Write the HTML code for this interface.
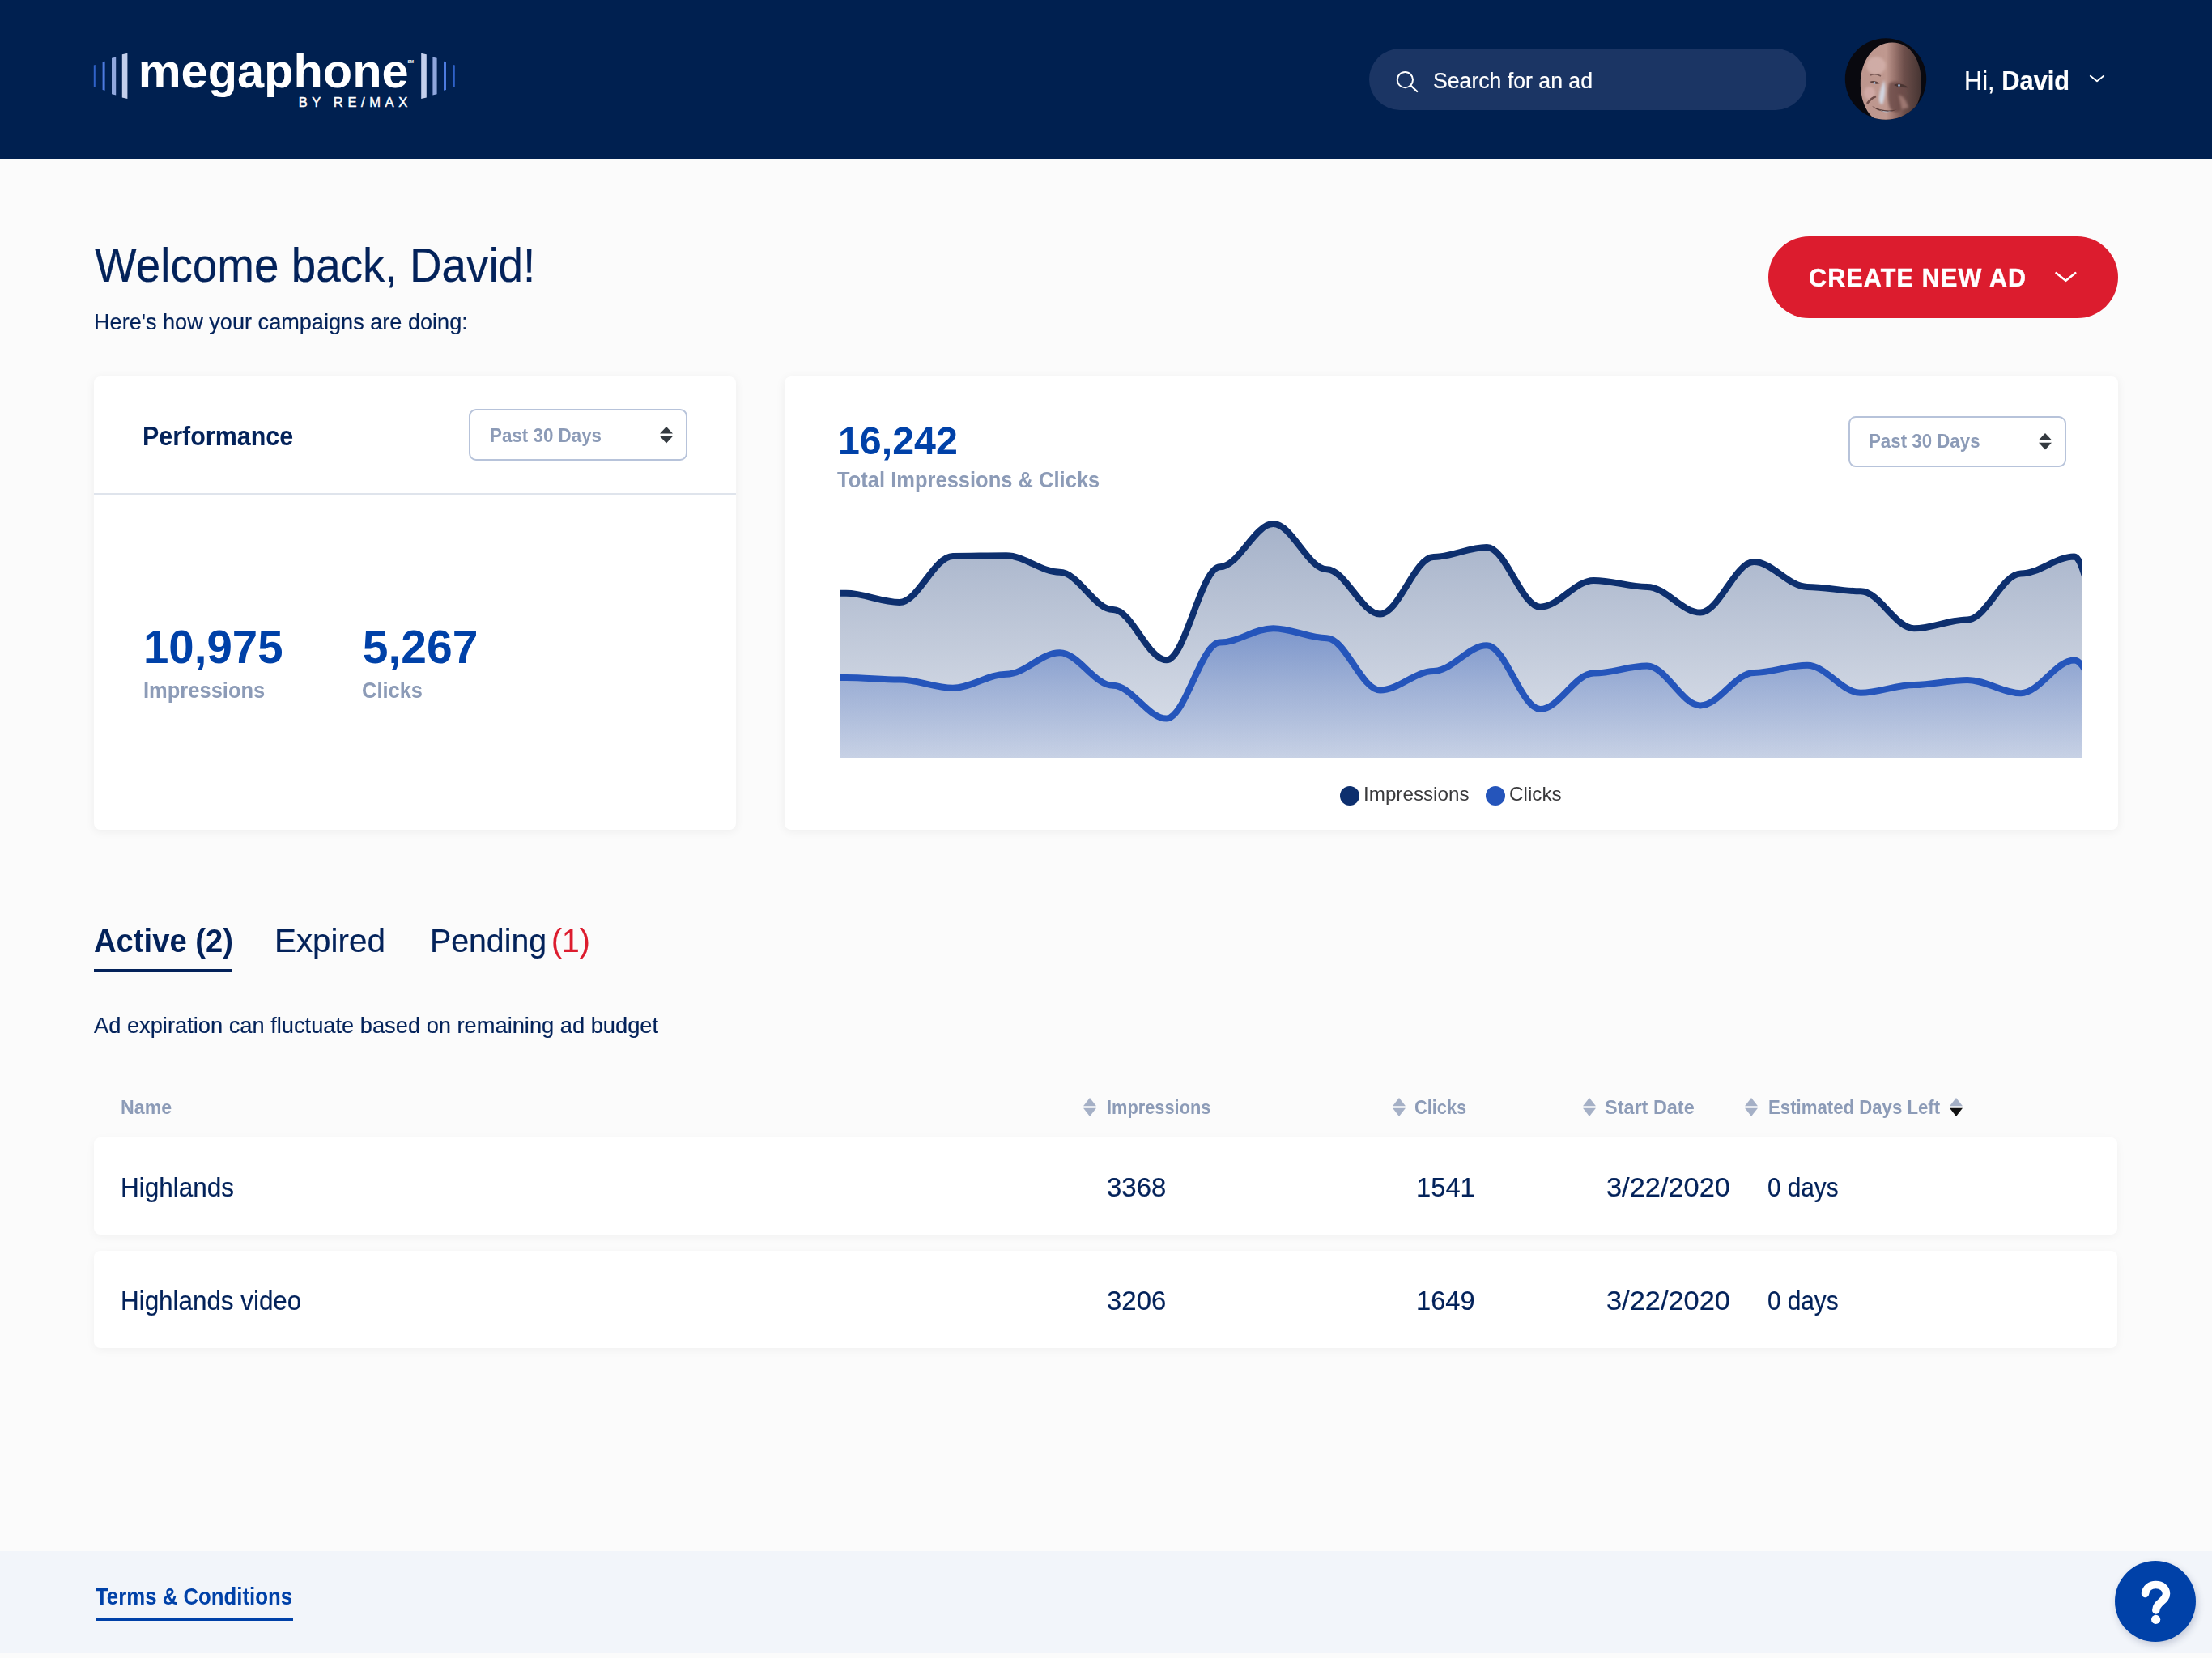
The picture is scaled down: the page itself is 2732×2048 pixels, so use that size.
<!DOCTYPE html>
<html lang="en"><head><meta charset="utf-8"><title>Megaphone by RE/MAX – Dashboard</title>
<style>
:root{--u:calc(100vw/2732)}
*{box-sizing:border-box;margin:0;padding:0}
html,body{width:calc(var(--u)*2732);height:calc(var(--u)*2048);overflow:hidden}
body{position:relative;background:#fbfbfb;font-family:"Liberation Sans",Arial,Helvetica,sans-serif;color:#03225a}
.abs{position:absolute;display:block}
.t{position:absolute;white-space:nowrap;line-height:1;transform-origin:0 0}
.hdr{position:absolute;left:0;top:0;width:calc(var(--u)*2732);height:calc(var(--u)*196);background:#002050}
.search{position:absolute;left:calc(var(--u)*1691);top:calc(var(--u)*60);width:calc(var(--u)*540);height:calc(var(--u)*76);border-radius:calc(var(--u)*38);background:#1b3564}
.card{position:absolute;background:#fff;border-radius:calc(var(--u)*8);box-shadow:0 calc(var(--u)*2) calc(var(--u)*12) calc(var(--u)*1) rgba(0,0,0,.05)}
.row{position:absolute;left:calc(var(--u)*116);width:calc(var(--u)*2499);height:calc(var(--u)*120);background:#fff;border-radius:calc(var(--u)*8);box-shadow:0 calc(var(--u)*3) calc(var(--u)*12) rgba(0,0,0,.042)}
.sel{position:absolute;border:calc(var(--u)*2) solid #b7c3da;border-radius:calc(var(--u)*9);background:#fff}
.btn{position:absolute;left:calc(var(--u)*2184);top:calc(var(--u)*292);width:calc(var(--u)*432);height:calc(var(--u)*101);border-radius:calc(var(--u)*51);background:#dc1c2e}
.foot{position:absolute;left:0;top:calc(var(--u)*1916);width:calc(var(--u)*2732);height:calc(var(--u)*126);background:#f2f5fa}
</style></head><body>
<div class="hdr"></div>
<svg class="abs" style="left:calc(var(--u)*110);top:calc(var(--u)*60);width:calc(var(--u)*460);height:calc(var(--u)*70)" viewBox="110 60 460 70"><path d="M115.8 80.5L117.8 80.0V108.0L115.8 107.5z" fill="#2f62c9"/><path d="M561.8 80.5L559.8 80.0V108.0L561.8 107.5z" fill="#2f62c9"/><path d="M126.6 76.5L129.6 75.7V111.8L126.6 111.0z" fill="#4d7be0"/><path d="M551.0 76.5L548.0 75.7V111.8L551.0 111.0z" fill="#4d7be0"/><path d="M138.0 71.8L143.2 70.6V117.4L138.0 116.2z" fill="#8fa6dc"/><path d="M539.6 71.8L534.4 70.6V117.4L539.6 116.2z" fill="#8fa6dc"/><path d="M150.8 67.2L157.4 65.8V122.0L150.8 120.6z" fill="#c3cfec"/><path d="M526.8 67.2L520.2 65.8V122.0L526.8 120.6z" fill="#c3cfec"/></svg><div class="t" style="left:calc(var(--u)*170.7);top:calc(var(--u)*57.6);font-size:calc(var(--u)*59.5);color:#fff;font-weight:700;">megaphone</div><div class="t" style="left:calc(var(--u)*368.7);top:calc(var(--u)*117.5);font-size:calc(var(--u)*16.5);color:#fff;letter-spacing:calc(var(--u)*5.62);-webkit-text-stroke:calc(var(--u)*.45) #fff;">BY RE/MAX</div><div class="t" style="left:calc(var(--u)*503.4);top:calc(var(--u)*74.4);font-size:calc(var(--u)*5);color:#fff;font-weight:700;">SM</div>
<div class="search"></div>
<svg class="abs" style="left:calc(var(--u)*1720);top:calc(var(--u)*84);width:calc(var(--u)*36);height:calc(var(--u)*36)" viewBox="1720 84 36 36"><circle cx="1735.4" cy="98.6" r="9.6" fill="none" stroke="#fff" stroke-width="2"/><path d="M1742.4 105.6L1750.2 113" stroke="#fff" stroke-width="2.2" stroke-linecap="round"/></svg>
<div class="t" style="left:calc(var(--u)*1769.6);top:calc(var(--u)*84.9);font-size:calc(var(--u)*28.2);color:#fff;-webkit-text-stroke:calc(var(--u)*.22);transform:scaleX(0.9453);">Search for an ad</div>
<svg class="abs" style="left:calc(var(--u)*2269);top:calc(var(--u)*37);width:calc(var(--u)*120);height:calc(var(--u)*120)" viewBox="0 0 120 120">
<defs><clipPath id="av"><circle cx="60" cy="60.5" r="50.2"/></clipPath>
<linearGradient id="sk" x1="0" y1="0" x2="1" y2="0"><stop offset="0" stop-color="#bd968e"/><stop offset=".42" stop-color="#bf988f"/><stop offset=".56" stop-color="#9a746d"/><stop offset=".72" stop-color="#6c4e4a"/><stop offset="1" stop-color="#453432"/></linearGradient>
<filter id="ab" x="-20%" y="-20%" width="140%" height="140%"><feGaussianBlur stdDeviation="1.6"/></filter>
<filter id="ab2" x="-20%" y="-20%" width="140%" height="140%"><feGaussianBlur stdDeviation=".7"/></filter></defs>
<circle cx="60" cy="60.5" r="50.2" fill="#09090f"/>
<g clip-path="url(#av)">
<path d="M29 72C27 40 44 15.5 68 15.5C92 15.5 105 40 104 68C103.5 92 90 116 66 116C44 116 31 98 29 72z" fill="url(#sk)"/>
<g filter="url(#ab)">
<ellipse cx="48" cy="44" rx="12" ry="11" fill="#e2c2be" opacity=".5"/>
<path d="M64 66C70 62 78 64 82 68C86 76 84 92 78 100C72 104 66 100 64 92C62 84 62 74 64 66z" fill="#6b4b47" opacity=".8"/>
<path d="M58 62C60 70 60 82 56 92C53 92 51 88 52 82C53 74 55 68 58 62z" fill="#d3d9e6" opacity=".95"/>
<ellipse cx="40" cy="78" rx="7" ry="8" fill="#ddb5b4" opacity=".6"/>
<path d="M76 80C82 82 86 88 88 96L80 98z" fill="#b08880" opacity=".7"/>
</g>
<g filter="url(#ab2)">
<path d="M40 64Q46 61 53 66Q46 68 40 64z" fill="#5b403d"/><circle cx="46" cy="65.5" r="1.4" fill="#9fb4d4"/>
<path d="M70 68Q78 64 88 71Q78 72 70 68z" fill="#4a3432"/><circle cx="76.5" cy="68.5" r="1.4" fill="#9fb4d4"/>
<path d="M41 56Q47 53 54 57" stroke="#7a5a55" stroke-width="1.6" fill="none"/>
<path d="M37 91Q42 84 48 82" stroke="#6f4d49" stroke-width="2.6" fill="none"/>
<path d="M43 94C50 101 64 104 74 98C64 101 52 99 43 94z" fill="#5a3d3a"/>
<path d="M52 98.5Q60 102 68 100Q60 103.6 52 98.5z" fill="#c9d6e6"/>
</g></g></svg>
<div class="t" style="left:calc(var(--u)*2426.1);top:calc(var(--u)*83.5);font-size:calc(var(--u)*32.3);color:#fff;-webkit-text-stroke:calc(var(--u)*.22);transform:scaleX(0.9542);">Hi, <b>David</b></div>
<svg class="abs" style="left:calc(var(--u)*2578);top:calc(var(--u)*89);width:calc(var(--u)*24);height:calc(var(--u)*16)" viewBox="2578 89 24 16"><path d="M2581.8 93.8L2590 100.3L2598.2 93.8" fill="none" stroke="#fff" stroke-width="1.9" stroke-linecap="round" stroke-linejoin="round"/></svg>
<div class="t" style="left:calc(var(--u)*117.0);top:calc(var(--u)*298.6);font-size:calc(var(--u)*59);color:#03225a;-webkit-text-stroke:calc(var(--u)*.22);transform:scaleX(0.9291);">Welcome back, David!</div>
<div class="t" style="left:calc(var(--u)*115.7);top:calc(var(--u)*382.9);font-size:calc(var(--u)*28.5);color:#03225a;-webkit-text-stroke:calc(var(--u)*.22);transform:scaleX(0.9513);">Here's how your campaigns are doing:</div>
<div class="btn"></div>
<div class="t" style="left:calc(var(--u)*2234.0);top:calc(var(--u)*327.6);font-size:calc(var(--u)*30.6);color:#fff;font-weight:700;letter-spacing:calc(var(--u)*1.2);transform:scaleX(0.9953);-webkit-text-stroke:calc(var(--u)*.5) #fff;">CREATE NEW AD</div>
<svg class="abs" style="left:calc(var(--u)*2534);top:calc(var(--u)*332);width:calc(var(--u)*36);height:calc(var(--u)*22)" viewBox="0 0 36 22"><path d="M5.6 5.3L17.4 14.8L29.2 5.3" fill="none" stroke="#fff" stroke-width="2.7" stroke-linecap="round" stroke-linejoin="round"/></svg>
<div class="card" style="left:calc(var(--u)*116);top:calc(var(--u)*465);width:calc(var(--u)*793);height:calc(var(--u)*559.8)"></div>
<div class="abs" style="left:calc(var(--u)*116);top:calc(var(--u)*609);width:calc(var(--u)*793);height:calc(var(--u)*2);background:#dfe4ec"></div>
<div class="t" style="left:calc(var(--u)*176.2);top:calc(var(--u)*522.6);font-size:calc(var(--u)*32.4);color:#03225a;font-weight:700;transform:scaleX(0.9399);">Performance</div>
<div class="sel" style="left:calc(var(--u)*578.5);top:calc(var(--u)*505);width:calc(var(--u)*270.5);height:calc(var(--u)*64.2)"></div><div class="t" style="left:calc(var(--u)*604.9);top:calc(var(--u)*526.9);font-size:calc(var(--u)*23.2);color:#8c9bb7;font-weight:700;transform:scaleX(0.9648);">Past 30 Days</div><svg class="abs" style="left:calc(var(--u)*815);top:calc(var(--u)*527.2);width:calc(var(--u)*16);height:calc(var(--u)*20.4)" viewBox="0 0 4 5.1"><path d="M2 0L0 2.15h4zM2 5.1L0 2.95h4z" fill="#343a40"/></svg>
<div class="t" style="left:calc(var(--u)*177.3);top:calc(var(--u)*771.0);font-size:calc(var(--u)*57);color:#0041a8;font-weight:700;transform:scaleX(0.9897);">10,975</div>
<div class="t" style="left:calc(var(--u)*176.6);top:calc(var(--u)*838.3);font-size:calc(var(--u)*28.5);color:#8c9bb7;font-weight:700;transform:scaleX(0.8950);">Impressions</div>
<div class="t" style="left:calc(var(--u)*447.8);top:calc(var(--u)*771.0);font-size:calc(var(--u)*57);color:#0041a8;font-weight:700;">5,267</div>
<div class="t" style="left:calc(var(--u)*447.0);top:calc(var(--u)*838.3);font-size:calc(var(--u)*28.5);color:#8c9bb7;font-weight:700;transform:scaleX(0.8928);">Clicks</div>
<div class="card" style="left:calc(var(--u)*969);top:calc(var(--u)*465);width:calc(var(--u)*1647);height:calc(var(--u)*559.8)"></div>
<div class="t" style="left:calc(var(--u)*1034.8);top:calc(var(--u)*520.7);font-size:calc(var(--u)*47.6);color:#0041a8;font-weight:700;transform:scaleX(1.0151);">16,242</div>
<div class="t" style="left:calc(var(--u)*1033.7);top:calc(var(--u)*579.3);font-size:calc(var(--u)*28);color:#8c9bb7;font-weight:700;transform:scaleX(0.9114);">Total Impressions &amp; Clicks</div>
<div class="sel" style="left:calc(var(--u)*2282.5);top:calc(var(--u)*513.5);width:calc(var(--u)*269.2);height:calc(var(--u)*63.5)"></div><div class="t" style="left:calc(var(--u)*2307.7);top:calc(var(--u)*534.3);font-size:calc(var(--u)*23.2);color:#8c9bb7;font-weight:700;transform:scaleX(0.9613);">Past 30 Days</div><svg class="abs" style="left:calc(var(--u)*2518);top:calc(var(--u)*535.3);width:calc(var(--u)*16);height:calc(var(--u)*20.4)" viewBox="0 0 4 5.1"><path d="M2 0L0 2.15h4zM2 5.1L0 2.95h4z" fill="#343a40"/></svg>
<svg class="abs" style="left:0;top:0;width:calc(var(--u)*2732);height:calc(var(--u)*2048)" viewBox="0 0 2732 2048">
<defs>
<linearGradient id="gd" gradientUnits="userSpaceOnUse" x1="0" y1="647" x2="0" y2="935"><stop offset="0" stop-color="#0d2f6e" stop-opacity=".37"/><stop offset="1" stop-color="#0d2f6e" stop-opacity=".14"/></linearGradient>
<linearGradient id="gb" gradientUnits="userSpaceOnUse" x1="0" y1="776" x2="0" y2="935"><stop offset="0" stop-color="#2454ba" stop-opacity=".42"/><stop offset=".45" stop-color="#2454ba" stop-opacity=".27"/><stop offset="1" stop-color="#2454ba" stop-opacity=".12"/></linearGradient>
<clipPath id="cc"><rect x="1037.0" y="600" width="1534.0" height="336.0"/></clipPath>
</defs>
<g clip-path="url(#cc)">
<path d="M1031.0 732.8L1045.0 732.8C1068.1 732.8 1087.9 744.0 1111.0 744.0C1134.0 744.0 1153.8 686.9 1176.9 686.9C1200.0 686.9 1219.8 686.2 1242.8 686.2C1265.9 686.2 1285.7 706.8 1308.8 706.8C1331.9 706.8 1351.7 753.1 1374.8 753.1C1397.8 753.1 1417.6 815.3 1440.7 815.3C1463.8 815.3 1483.6 700.3 1506.7 700.3C1529.7 700.3 1549.5 647.1 1572.6 647.1C1595.7 647.1 1615.5 703.2 1638.6 703.2C1661.6 703.2 1681.4 758.5 1704.5 758.5C1727.6 758.5 1747.4 688.0 1770.5 688.0C1793.5 688.0 1813.3 676.0 1836.4 676.0C1859.5 676.0 1879.3 749.7 1902.3 749.7C1925.4 749.7 1945.2 716.9 1968.3 716.9C1991.4 716.9 2011.2 724.9 2034.2 724.9C2057.3 724.9 2077.1 756.6 2100.2 756.6C2123.3 756.6 2143.1 694.1 2166.2 694.1C2189.2 694.1 2209.0 724.9 2232.1 724.9C2255.2 724.9 2275.0 730.3 2298.1 730.3C2321.1 730.3 2340.9 776.2 2364.0 776.2C2387.1 776.2 2406.9 765.4 2429.9 765.4C2453.0 765.4 2472.8 708.6 2495.9 708.6C2519.0 708.6 2538.8 687.5 2561.9 687.5C2584.9 687.5 2604.7 936.0 2627.8 936.0L2627.8 936.0 L1031.0 936.0Z" fill="url(#gd)"/>
<path d="M1031.0 837.0L1045.0 837.0C1068.1 837.0 1087.9 839.5 1111.0 839.5C1134.0 839.5 1153.8 849.7 1176.9 849.7C1200.0 849.7 1219.8 832.7 1242.8 832.7C1265.9 832.7 1285.7 806.3 1308.8 806.3C1331.9 806.3 1351.7 846.8 1374.8 846.8C1397.8 846.8 1417.6 887.6 1440.7 887.6C1463.8 887.6 1483.6 793.6 1506.7 793.6C1529.7 793.6 1549.5 776.2 1572.6 776.2C1595.7 776.2 1615.5 788.2 1638.6 788.2C1661.6 788.2 1681.4 852.5 1704.5 852.5C1727.6 852.5 1747.4 829.0 1770.5 829.0C1793.5 829.0 1813.3 797.2 1836.4 797.2C1859.5 797.2 1879.3 876.0 1902.3 876.0C1925.4 876.0 1945.2 831.6 1968.3 831.6C1991.4 831.6 2011.2 822.5 2034.2 822.5C2057.3 822.5 2077.1 871.4 2100.2 871.4C2123.3 871.4 2143.1 830.9 2166.2 830.9C2189.2 830.9 2209.0 821.8 2232.1 821.8C2255.2 821.8 2275.0 855.8 2298.1 855.8C2321.1 855.8 2340.9 846.0 2364.0 846.0C2387.1 846.0 2406.9 839.9 2429.9 839.9C2453.0 839.9 2472.8 856.2 2495.9 856.2C2519.0 856.2 2538.8 815.5 2561.9 815.5C2584.9 815.5 2604.7 936.0 2627.8 936.0L2627.8 936.0 L1031.0 936.0Z" fill="url(#gb)"/>
<path d="M1031.0 732.8L1045.0 732.8C1068.1 732.8 1087.9 744.0 1111.0 744.0C1134.0 744.0 1153.8 686.9 1176.9 686.9C1200.0 686.9 1219.8 686.2 1242.8 686.2C1265.9 686.2 1285.7 706.8 1308.8 706.8C1331.9 706.8 1351.7 753.1 1374.8 753.1C1397.8 753.1 1417.6 815.3 1440.7 815.3C1463.8 815.3 1483.6 700.3 1506.7 700.3C1529.7 700.3 1549.5 647.1 1572.6 647.1C1595.7 647.1 1615.5 703.2 1638.6 703.2C1661.6 703.2 1681.4 758.5 1704.5 758.5C1727.6 758.5 1747.4 688.0 1770.5 688.0C1793.5 688.0 1813.3 676.0 1836.4 676.0C1859.5 676.0 1879.3 749.7 1902.3 749.7C1925.4 749.7 1945.2 716.9 1968.3 716.9C1991.4 716.9 2011.2 724.9 2034.2 724.9C2057.3 724.9 2077.1 756.6 2100.2 756.6C2123.3 756.6 2143.1 694.1 2166.2 694.1C2189.2 694.1 2209.0 724.9 2232.1 724.9C2255.2 724.9 2275.0 730.3 2298.1 730.3C2321.1 730.3 2340.9 776.2 2364.0 776.2C2387.1 776.2 2406.9 765.4 2429.9 765.4C2453.0 765.4 2472.8 708.6 2495.9 708.6C2519.0 708.6 2538.8 687.5 2561.9 687.5C2584.9 687.5 2604.7 936.0 2627.8 936.0" fill="none" stroke="#0d2f6e" stroke-width="8" stroke-linejoin="round"/>
<path d="M1031.0 837.0L1045.0 837.0C1068.1 837.0 1087.9 839.5 1111.0 839.5C1134.0 839.5 1153.8 849.7 1176.9 849.7C1200.0 849.7 1219.8 832.7 1242.8 832.7C1265.9 832.7 1285.7 806.3 1308.8 806.3C1331.9 806.3 1351.7 846.8 1374.8 846.8C1397.8 846.8 1417.6 887.6 1440.7 887.6C1463.8 887.6 1483.6 793.6 1506.7 793.6C1529.7 793.6 1549.5 776.2 1572.6 776.2C1595.7 776.2 1615.5 788.2 1638.6 788.2C1661.6 788.2 1681.4 852.5 1704.5 852.5C1727.6 852.5 1747.4 829.0 1770.5 829.0C1793.5 829.0 1813.3 797.2 1836.4 797.2C1859.5 797.2 1879.3 876.0 1902.3 876.0C1925.4 876.0 1945.2 831.6 1968.3 831.6C1991.4 831.6 2011.2 822.5 2034.2 822.5C2057.3 822.5 2077.1 871.4 2100.2 871.4C2123.3 871.4 2143.1 830.9 2166.2 830.9C2189.2 830.9 2209.0 821.8 2232.1 821.8C2255.2 821.8 2275.0 855.8 2298.1 855.8C2321.1 855.8 2340.9 846.0 2364.0 846.0C2387.1 846.0 2406.9 839.9 2429.9 839.9C2453.0 839.9 2472.8 856.2 2495.9 856.2C2519.0 856.2 2538.8 815.5 2561.9 815.5C2584.9 815.5 2604.7 936.0 2627.8 936.0" fill="none" stroke="#2555bb" stroke-width="8" stroke-linejoin="round"/>
</g>
<circle cx="1667" cy="983" r="12" fill="#0d2f6e"/>
<circle cx="1847" cy="983" r="12" fill="#2555bb"/>
</svg>
<div class="t" style="left:calc(var(--u)*1684.4);top:calc(var(--u)*969.1);font-size:calc(var(--u)*24);color:#3a3a3c;transform:scaleX(1.0087);">Impressions</div>
<div class="t" style="left:calc(var(--u)*1864.2);top:calc(var(--u)*969.1);font-size:calc(var(--u)*24);color:#3a3a3c;transform:scaleX(1.0100);">Clicks</div>
<div class="t" style="left:calc(var(--u)*115.6);top:calc(var(--u)*1142.2);font-size:calc(var(--u)*41);color:#03225a;font-weight:700;transform:scaleX(0.9315);">Active (2)</div>
<div class="abs" style="left:calc(var(--u)*116);top:calc(var(--u)*1197);width:calc(var(--u)*171);height:calc(var(--u)*4);background:#03225a"></div>
<div class="t" style="left:calc(var(--u)*338.7);top:calc(var(--u)*1142.2);font-size:calc(var(--u)*41);color:#03225a;-webkit-text-stroke:calc(var(--u)*.22);transform:scaleX(0.9846);">Expired</div>
<div class="t" style="left:calc(var(--u)*530.8);top:calc(var(--u)*1142.2);font-size:calc(var(--u)*41);color:#03225a;-webkit-text-stroke:calc(var(--u)*.22);transform:scaleX(0.9576);">Pending</div>
<div class="t" style="left:calc(var(--u)*680.8);top:calc(var(--u)*1142.2);font-size:calc(var(--u)*41);color:#dc1c2e;-webkit-text-stroke:calc(var(--u)*.22);transform:scaleX(0.9534);">(1)</div>
<div class="t" style="left:calc(var(--u)*116.1);top:calc(var(--u)*1252.4);font-size:calc(var(--u)*28.5);color:#03225a;-webkit-text-stroke:calc(var(--u)*.22);transform:scaleX(0.9564);">Ad expiration can fluctuate based on remaining ad budget</div>
<div class="t" style="left:calc(var(--u)*148.7);top:calc(var(--u)*1355.5);font-size:calc(var(--u)*24);color:#8c9bb7;font-weight:700;transform:scaleX(0.9676);">Name</div>
<svg class="abs" style="left:calc(var(--u)*1338.0);top:calc(var(--u)*1355.5);width:calc(var(--u)*16);height:calc(var(--u)*23)" viewBox="0 0 16 23"><path d="M8 0L16 10.2H0z" fill="#a5b0c6"/><path d="M8 23L16 12.8H0z" fill="#a5b0c6"/></svg>
<div class="t" style="left:calc(var(--u)*1367.3);top:calc(var(--u)*1355.5);font-size:calc(var(--u)*24);color:#8c9bb7;font-weight:700;transform:scaleX(0.9079);">Impressions</div>
<svg class="abs" style="left:calc(var(--u)*1720.0);top:calc(var(--u)*1355.5);width:calc(var(--u)*16);height:calc(var(--u)*23)" viewBox="0 0 16 23"><path d="M8 0L16 10.2H0z" fill="#a5b0c6"/><path d="M8 23L16 12.8H0z" fill="#a5b0c6"/></svg>
<div class="t" style="left:calc(var(--u)*1747.3);top:calc(var(--u)*1355.5);font-size:calc(var(--u)*24);color:#8c9bb7;font-weight:700;transform:scaleX(0.9075);">Clicks</div>
<svg class="abs" style="left:calc(var(--u)*1955.0);top:calc(var(--u)*1355.5);width:calc(var(--u)*16);height:calc(var(--u)*23)" viewBox="0 0 16 23"><path d="M8 0L16 10.2H0z" fill="#a5b0c6"/><path d="M8 23L16 12.8H0z" fill="#a5b0c6"/></svg>
<div class="t" style="left:calc(var(--u)*1982.4);top:calc(var(--u)*1355.5);font-size:calc(var(--u)*24);color:#8c9bb7;font-weight:700;transform:scaleX(0.9764);">Start Date</div>
<svg class="abs" style="left:calc(var(--u)*2155.0);top:calc(var(--u)*1355.5);width:calc(var(--u)*16);height:calc(var(--u)*23)" viewBox="0 0 16 23"><path d="M8 0L16 10.2H0z" fill="#a5b0c6"/><path d="M8 23L16 12.8H0z" fill="#a5b0c6"/></svg>
<div class="t" style="left:calc(var(--u)*2183.6);top:calc(var(--u)*1355.5);font-size:calc(var(--u)*24);color:#8c9bb7;font-weight:700;transform:scaleX(0.9246);">Estimated Days Left</div>
<svg class="abs" style="left:calc(var(--u)*2408.0);top:calc(var(--u)*1355.5);width:calc(var(--u)*16);height:calc(var(--u)*23)" viewBox="0 0 16 23"><path d="M8 0L16 10.2H0z" fill="#a5b0c6"/><path d="M8 23L16 12.8H0z" fill="#111"/></svg>
<div class="row" style="top:calc(var(--u)*1405)"></div>
<div class="t" style="left:calc(var(--u)*148.6);top:calc(var(--u)*1450.6);font-size:calc(var(--u)*32.5);color:#03225a;-webkit-text-stroke:calc(var(--u)*.22);transform:scaleX(0.9678);">Highlands</div>
<div class="t" style="left:calc(var(--u)*1366.6);top:calc(var(--u)*1450.6);font-size:calc(var(--u)*32.5);color:#03225a;-webkit-text-stroke:calc(var(--u)*.22);transform:scaleX(1.0139);">3368</div>
<div class="t" style="left:calc(var(--u)*1749.2);top:calc(var(--u)*1450.6);font-size:calc(var(--u)*32.5);color:#03225a;-webkit-text-stroke:calc(var(--u)*.22);transform:scaleX(1.0066);">1541</div>
<div class="t" style="left:calc(var(--u)*1983.7);top:calc(var(--u)*1450.6);font-size:calc(var(--u)*32.5);color:#03225a;-webkit-text-stroke:calc(var(--u)*.22);transform:scaleX(1.0577);">3/22/2020</div>
<div class="t" style="left:calc(var(--u)*2183.0);top:calc(var(--u)*1450.6);font-size:calc(var(--u)*32.5);color:#03225a;-webkit-text-stroke:calc(var(--u)*.22);transform:scaleX(0.9148);">0 days</div>
<div class="row" style="top:calc(var(--u)*1545)"></div>
<div class="t" style="left:calc(var(--u)*148.6);top:calc(var(--u)*1590.6);font-size:calc(var(--u)*32.5);color:#03225a;-webkit-text-stroke:calc(var(--u)*.22);transform:scaleX(0.9654);">Highlands video</div>
<div class="t" style="left:calc(var(--u)*1366.6);top:calc(var(--u)*1590.6);font-size:calc(var(--u)*32.5);color:#03225a;-webkit-text-stroke:calc(var(--u)*.22);transform:scaleX(1.0139);">3206</div>
<div class="t" style="left:calc(var(--u)*1749.2);top:calc(var(--u)*1590.6);font-size:calc(var(--u)*32.5);color:#03225a;-webkit-text-stroke:calc(var(--u)*.22);transform:scaleX(1.0054);">1649</div>
<div class="t" style="left:calc(var(--u)*1983.7);top:calc(var(--u)*1590.6);font-size:calc(var(--u)*32.5);color:#03225a;-webkit-text-stroke:calc(var(--u)*.22);transform:scaleX(1.0577);">3/22/2020</div>
<div class="t" style="left:calc(var(--u)*2183.0);top:calc(var(--u)*1590.6);font-size:calc(var(--u)*32.5);color:#03225a;-webkit-text-stroke:calc(var(--u)*.22);transform:scaleX(0.9148);">0 days</div>
<div class="foot"></div>
<div class="t" style="left:calc(var(--u)*117.9);top:calc(var(--u)*1958.2);font-size:calc(var(--u)*28.8);color:#0041a8;font-weight:700;transform:scaleX(0.8956);">Terms &amp; Conditions</div>
<div class="abs" style="left:calc(var(--u)*118);top:calc(var(--u)*1998);width:calc(var(--u)*244);height:calc(var(--u)*4);background:#0041a8"></div>
<svg class="abs" style="left:calc(var(--u)*2590);top:calc(var(--u)*1906);width:calc(var(--u)*142);height:calc(var(--u)*142)" viewBox="2590 1906 142 142">
<defs><filter id="hs" x="-30%" y="-30%" width="160%" height="160%"><feGaussianBlur stdDeviation="5"/></filter></defs>
<circle cx="2664" cy="1982" r="50" fill="#1a2a5a" opacity=".22" filter="url(#hs)"/>
<circle cx="2662" cy="1978" r="50" fill="#0041a8"/>
<path d="M2649.5 1968.5C2650.5 1961.5 2655.5 1957.5 2662.5 1957.5C2670 1957.5 2675.5 1962 2675.5 1968.5C2675.5 1977.5 2662.8 1979.5 2662.8 1989" fill="none" stroke="#fff" stroke-width="9.5" stroke-linecap="round" stroke-linejoin="round"/>
<circle cx="2662.6" cy="2000.4" r="5.6" fill="#fff"/>
</svg>
</body></html>
